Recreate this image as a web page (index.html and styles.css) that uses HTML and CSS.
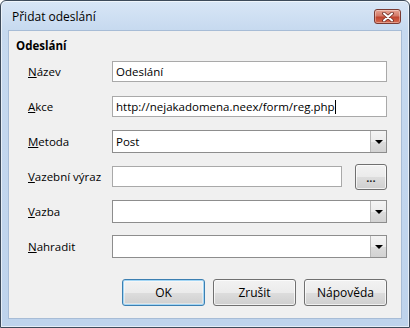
FILE: index.html
```html
<!DOCTYPE html>
<html lang="cs">
<head>
<meta charset="utf-8">
<title>Přidat odeslání</title>
<link rel="stylesheet" href="styles.css">
</head>
<body>
<div class="window">
  <div class="titlebar">
    <span class="title">Přidat odeslání</span>
    <div class="close">
      <svg width="14" height="10" viewBox="0 0 14 10"><path d="M3 1.5 L11 8.5 M11 1.5 L3 8.5" stroke="#6a2a22" stroke-width="3.6" stroke-linecap="round"/><path d="M3 1.5 L11 8.5 M11 1.5 L3 8.5" stroke="#fff" stroke-width="2" stroke-linecap="round"/></svg>
    </div>
  </div>
  <div class="client">
    <div class="section">Odeslání</div>
    <div class="row">
      <span class="label"><u>N</u>ázev</span>
      <div class="input">Odeslání</div>
    </div>
    <div class="row">
      <span class="label"><u>A</u>kce</span>
      <div class="input">http://nejakadomena.neex/form/reg.php<span class="caret"></span></div>
    </div>
    <div class="row">
      <span class="label"><u>M</u>etoda</span>
      <div class="combo"><span class="combo-text">Post</span><span class="drop"><span class="tri"></span></span></div>
    </div>
    <div class="row">
      <span class="label"><u>V</u>azební výraz</span>
      <div class="input short"></div>
      <div class="btn small"><span class="dots">...</span></div>
    </div>
    <div class="row">
      <span class="label"><u>V</u>azba</span>
      <div class="combo"><span class="combo-text"></span><span class="drop"><span class="tri"></span></span></div>
    </div>
    <div class="row">
      <span class="label"><u>N</u>ahradit</span>
      <div class="combo"><span class="combo-text"></span><span class="drop"><span class="tri"></span></span></div>
    </div>
    <div class="buttons">
      <div class="btn default">OK</div>
      <div class="btn">Zrušit</div>
      <div class="btn">Nápověda</div>
    </div>
  </div>
</div>
</body>
</html>
```
FILE: styles.css
```css
* { box-sizing: border-box; }
html, body { margin: 0; padding: 0; background: #ffffff; }
body {
  font-family: "Open Sans", "Noto Sans", "DejaVu Sans", sans-serif;
  font-size: 11.5px;
  color: #000;
}
.window {
  width: 410px;
  height: 328px;
  border: 1px solid #3d4a5a;
  border-radius: 6px 6px 0 0;
  background: linear-gradient(#d8e6f6 0px, #c6d9ef 30px, #bed3ec 100%);
  box-shadow: inset 0 0 0 1px rgba(255,255,255,0.6);
  padding: 0 7px 8px 7px;
  display: flex;
  flex-direction: column;
}
.titlebar {
  height: 29px;
  display: flex;
  align-items: center;
  justify-content: space-between;
  padding: 0 1px 0 4px;
}
.title {
  font-size: 12px;
  color: #000;
  margin-top: 2px;
}
.close {
  width: 27px;
  height: 15px;
  margin-top: 2px;
  border: 1px solid #7a3a32;
  border-radius: 3px;
  background: linear-gradient(#e8a493 0%, #d47a68 45%, #c0452f 55%, #d66a4f 100%);
  box-shadow: inset 0 0 0 1px rgba(255,255,255,0.35);
  display: flex;
  align-items: center;
  justify-content: center;
}
.close svg { display: block; }
.client {
  flex: 1;
  background: #f0f0f0;
  border: 1px solid #a7bcd6;
  padding: 7px 14px 0 7px;
  display: flex;
  flex-direction: column;
}
.section {
  font-weight: bold;
  line-height: 16px;
  height: 16px;
}
.row {
  height: 35px;
  display: flex;
  align-items: center;
  padding-left: 12px;
}
.label {
  width: 84px;
  flex: none;
}
.input {
  width: 282px;
  height: 21px;
  background: #fff;
  border: 1px solid #a9a9a9;
  padding: 0 3px;
  line-height: 19px;
  white-space: nowrap;
  overflow: hidden;
}
.input.short { width: 236px; }
.caret {
  display: inline-block;
  width: 1px;
  height: 14px;
  background: #000;
  vertical-align: -3px;
}
.combo {
  width: 282px;
  height: 23px;
  background: #fff;
  border: 1px solid #8d8d8d;
  display: flex;
  align-items: stretch;
}
.combo-text {
  flex: 1;
  padding: 0 3px;
  line-height: 21px;
}
.drop {
  width: 16px;
  border-left: 1px solid #b8b8b8;
  background: linear-gradient(#f4f4f4 0%, #ebebeb 50%, #dcdcdc 51%, #d2d2d2 100%);
  display: flex;
  align-items: center;
  justify-content: center;
}
.tri {
  width: 0;
  height: 0;
  border-left: 4px solid transparent;
  border-right: 4px solid transparent;
  border-top: 4px solid #000;
}
.btn {
  width: 83px;
  height: 27px;
  border: 1px solid #707070;
  border-radius: 3px;
  background: linear-gradient(#f2f2f2 0%, #ebebeb 50%, #dddddd 51%, #cfcfcf 100%);
  box-shadow: inset 0 0 0 1px rgba(255,255,255,0.7);
  display: flex;
  align-items: center;
  justify-content: center;
  font-size: 12px;
}
.btn.small {
  width: 33px;
  height: 26px;
  margin-left: 13px;
  align-items: flex-end;
  padding-bottom: 6px;
}
.dots {
  font-size: 11px;
  line-height: 10px;
  letter-spacing: 0;
  font-weight: bold;
  color: #222;
}
.btn.default {
  border-color: #3c7fb1;
  box-shadow: inset 0 0 0 1px #a3d6f5, inset 0 0 0 2px rgba(255,255,255,0.4);
}
.buttons {
  display: flex;
  justify-content: flex-end;
  gap: 8px;
  margin-top: 15px;
}
```
